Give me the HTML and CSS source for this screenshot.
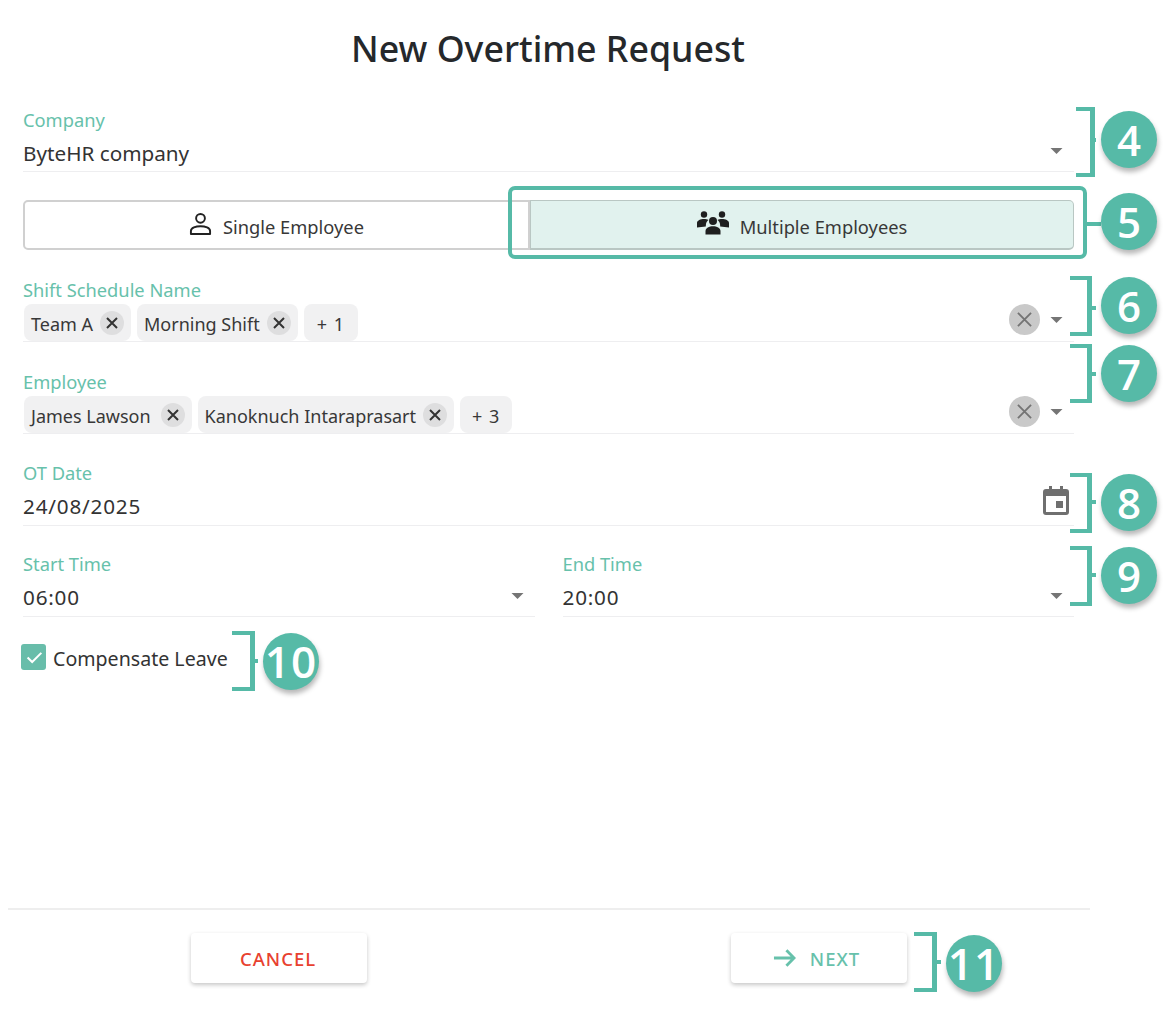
FILE: index.html
```html
<!DOCTYPE html>
<html lang="en">
<head>
<meta charset="utf-8">
<title>New Overtime Request</title>
<link rel="stylesheet" href="styles.css">
</head>
<body>
<main class="page">
  <h1 class="title">New Overtime Request</h1>
  <form class="form">
    <div class="field">
      <span class="label">Company</span>
      <div class="control"><span class="value">ByteHR company</span>
        <span class="adorn"><svg class="caret" viewBox="0 0 14 7"><path d="M0 0h14L7 7z"/></svg></span></div>
    </div>
    <div class="toggle">
      <button type="button" class="seg">
        <svg class="seg-icon" viewBox="0 0 24 24"><circle cx="12" cy="6.600" r="4.600" fill="none" stroke="#222" stroke-width="2"/><path d="M2 23v-3.200c0-3.200 5-4.900 10-4.900s10 1.700 10 4.900V23z" fill="none" stroke="#222" stroke-width="2" stroke-linejoin="round"/></svg>
        Single Employee</button>
      <button type="button" class="seg seg-on">
        <svg class="seg-icon seg-icon-wide" viewBox="0 0 32 24"><g fill="#1f1f1f"><circle cx="7" cy="4" r="3.200"/><circle cx="25" cy="4" r="3.200"/><path d="M0 17v-4.500c0-2.500 3.500-4 7-4 1.700 0 3.300.3 4.500 1-1.300 1-2.200 2.400-2.500 4-.1.800-.2 1.600-.2 2.500z"/><path d="M32 17v-4.500c0-2.500-3.500-4-7-4-1.700 0-3.300.3-4.500 1 1.300 1 2.200 2.400 2.500 4 .1.800.2 1.600.2 2.500z"/><circle cx="16" cy="10.500" r="4"/><path d="M8.500 24v-3.500c0-3 3.700-4.800 7.500-4.800s7.500 1.800 7.500 4.800V24z"/></g></svg>
        Multiple Employees</button>
    </div>
    <div class="field">
      <span class="label">Shift Schedule Name</span>
      <div class="control control-chips">
        <span class="chip">Team A<span class="chip-x"><svg viewBox="0 0 12 12"><path d="M1 1l10 10M11 1L1 11"/></svg></span></span>
        <span class="chip">Morning Shift<span class="chip-x"><svg viewBox="0 0 12 12"><path d="M1 1l10 10M11 1L1 11"/></svg></span></span>
        <span class="chip chip-more">+ 1</span>
        <span class="adorn"><span class="clear"><svg viewBox="0 0 16 16"><path d="M1 1l14 14M15 1L1 15"/></svg></span><svg class="caret" viewBox="0 0 14 7"><path d="M0 0h14L7 7z"/></svg></span>
      </div>
    </div>
    <div class="field">
      <span class="label">Employee</span>
      <div class="control control-chips">
        <span class="chip chip-wide">James Lawson<span class="chip-x"><svg viewBox="0 0 12 12"><path d="M1 1l10 10M11 1L1 11"/></svg></span></span>
        <span class="chip">Kanoknuch Intaraprasart<span class="chip-x"><svg viewBox="0 0 12 12"><path d="M1 1l10 10M11 1L1 11"/></svg></span></span>
        <span class="chip chip-more chip-more-tight">+ 3</span>
        <span class="adorn"><span class="clear"><svg viewBox="0 0 16 16"><path d="M1 1l14 14M15 1L1 15"/></svg></span><svg class="caret" viewBox="0 0 14 7"><path d="M0 0h14L7 7z"/></svg></span>
      </div>
    </div>
    <div class="field">
      <span class="label label-up">OT Date</span>
      <div class="control"><span class="value value-num">24/08/2025</span>
        <span class="adorn"><svg class="calendar" viewBox="0 0 26 29"><path fill="#6f6f6f" fill-rule="evenodd" d="M6 0h3v3h8V0h3v3h3a3 3 0 0 1 3 3v20a3 3 0 0 1-3 3H3a3 3 0 0 1-3-3V6a3 3 0 0 1 3-3h3zM3 10v16h20V10zm10 5h7v7h-7z"/></svg></span></div>
    </div>
    <div class="field-row">
      <div class="field">
        <span class="label label-up">Start Time</span>
        <div class="control"><span class="value value-num">06:00</span>
          <span class="adorn"><svg class="caret" viewBox="0 0 14 7"><path d="M0 0h14L7 7z"/></svg></span></div>
      </div>
      <div class="field">
        <span class="label label-up">End Time</span>
        <div class="control"><span class="value value-num">20:00</span>
          <span class="adorn"><svg class="caret" viewBox="0 0 14 7"><path d="M0 0h14L7 7z"/></svg></span></div>
      </div>
    </div>
    <label class="check"><span class="box"><svg viewBox="0 0 24 24"><path d="M5 12.500l5 5L20 7.500"/></svg></span><span class="check-text">Compensate Leave</span></label>
  </form>
  <footer class="footer">
    <button type="button" class="action action-cancel">CANCEL</button>
    <button type="button" class="action action-next"><svg viewBox="0 0 24 20"><path d="M1 10h21M14 2l8 8-8 8"/></svg>NEXT</button>
  </footer>
</main>

<div class="note note-4"><span class="bracket"></span><span class="badge">4</span></div>
<div class="frame"></div>
<div class="note note-5"><span class="stem"></span><span class="badge">5</span></div>
<div class="note note-6"><span class="bracket"></span><span class="badge">6</span></div>
<div class="note note-7"><span class="bracket"></span><span class="badge">7</span></div>
<div class="note note-8"><span class="bracket"></span><span class="badge">8</span></div>
<div class="note note-9"><span class="bracket"></span><span class="badge">9</span></div>
<div class="note note-10"><span class="bracket"></span><span class="badge badge-two">10</span></div>
<div class="note note-11"><span class="bracket"></span><span class="badge badge-two">11</span></div>
</body>
</html>
```

FILE: styles.css
```css
* { box-sizing: border-box; }
html, body { margin: 0; padding: 0; background: #fff; }
body {
  position: relative;
  width: 1167px;
  height: 1023px;
  overflow: hidden;
  font-family: "Noto Sans", "Open Sans", sans-serif;
  color: #2e2e2e;
}
.page {
  width: 1082px;
  margin-left: 8px;
  display: flex;
  flex-direction: column;
}
.title {
  margin: 0;
  height: 109px;
  padding: 23px 2px 0 0;
  text-align: center;
  font-size: 35.700px;
  line-height: 50px;
  font-weight: 500;
  color: #25282b;
}
.form {
  height: 799px;
  padding: 0 16px 0 15px;
  display: flex;
  flex-direction: column;
  gap: 29px;
}
.form > .toggle { margin-top: -1px; }
.field {
  height: 63px;
  display: flex;
  flex-direction: column;
}
.form > .field { flex: none; }
.field-row { display: flex; gap: 28px; margin-top: -1px; }
.field-row .field { flex: 1 1 0; }
.label {
  font-size: 18.300px;
  line-height: 22px;
  color: #67c1ab;
}
.label-up { margin-top: -1px; }
.control {
  flex: 1;
  display: flex;
  align-items: center;
  gap: 6px;
  border-bottom: 1px solid #eeeef0;
}
.control-chips { align-items: flex-start; padding: 3px 0 0 1px; }
.value { font-size: 20.700px; line-height: 30px; color: #333; padding-top: 4px; }
.value-num { letter-spacing: .8px; padding-top: 3px; }
.adorn {
  margin-left: auto;
  display: flex;
  align-items: center;
  gap: 10px;
}
.caret { width: 13px; height: 6px; fill: #757575; margin-right: 11px; }
.clear {
  width: 31px;
  height: 31px;
  border-radius: 50%;
  background: #c9c9c9;
  display: flex;
  align-items: center;
  justify-content: center;
}
.clear svg { width: 15px; height: 15px; fill: none; stroke: #747474; stroke-width: 2; }
.calendar { width: 26px; height: 29px; margin: 0 5px 9px 0; }
.toggle {
  height: 50px;
  display: flex;
}
.seg {
  flex: 0 0 507px;
  display: flex;
  align-items: center;
  justify-content: center;
  gap: 11px;
  background: #fff;
  border: 2px solid #d0d0d0;
  border-radius: 5px 0 0 5px;
  font-family: inherit;
  font-size: 18.300px;
  color: #383838;
  padding: 3px 0 0;
}
.seg-on {
  flex: 1;
  background: #e1f2ee;
  border: 1px solid #b9c7c3;
  border-bottom-width: 2px;
  border-radius: 0 5px 5px 0;
  gap: 11px;
}
.seg-icon { width: 23px; height: 25px; margin-top: -7px; }
.seg-icon-wide { width: 32px; height: 25px; }
.chip {
  height: 37px;
  padding: 3px 7px 0;
  background: #f1f1f2;
  border-radius: 8px;
  display: flex;
  align-items: center;
  gap: 7px;
  font-size: 18px;
  color: #383838;
}
.chip-wide { gap: 10px; }
.chip-more { padding: 3px 13px 0; letter-spacing: 1px; }
.chip-more-tight { padding: 3px 12px 0; }
.chip-x {
  width: 24px;
  height: 24px;
  margin-top: -3px;
  border-radius: 50%;
  background: #dededf;
  display: flex;
  align-items: center;
  justify-content: center;
}
.chip-x svg { width: 12px; height: 12px; fill: none; stroke: #333; stroke-width: 2; }
.check {
  display: flex;
  align-items: center;
  gap: 7px;
  height: 26px;
  margin: -2px 0 0 -2px;
  font-size: 19.600px;
  color: #333;
}
.check-text { padding-top: 3px; }
.box {
  width: 25px;
  height: 26px;
  border-radius: 3px;
  background: #68bdaa;
  display: flex;
  align-items: center;
  justify-content: center;
}
.box svg { width: 22px; height: 22px; fill: none; stroke: #fff; stroke-width: 2.200; }
.footer {
  height: 115px;
  border-top: 2px solid #eeeeee;
  display: flex;
  gap: 364px;
  padding: 23px 0 0 183px;
}
.action {
  width: 176px;
  height: 50px;
  background: #fff;
  border: 0;
  border-radius: 4px;
  box-shadow: 0 2px 4px rgba(0, 0, 0, .22);
  font-family: inherit;
  font-size: 18.500px;
  font-weight: 500;
  letter-spacing: 1px;
  display: flex;
  align-items: center;
  justify-content: center;
  gap: 14px;
}
.action-cancel { color: #e8412f; padding: 0 2px 0 0; }
.action-next { color: #67c1ab; padding: 0 5px 0 0; }
.action-next svg { width: 23px; height: 20px; fill: none; stroke: #67c1ab; stroke-width: 3; }

.note { position: absolute; display: flex; align-items: center; }
.bracket {
  display: block;
  position: relative;
  flex: none;
  height: 100%;
  margin-right: var(--stem, 9px);
  border: 4px solid #56baa7;
  border-left: 0;
  border-right-width: 5px;
}
.bracket::after {
  content: "";
  position: absolute;
  left: 100%;
  top: calc(50% - 2px + var(--stem-y, 0px));
  width: var(--stem, 9px);
  height: 4px;
  background: #56baa7;
}
.stem { display: block; width: 14px; height: 4px; margin-top: 5px; background: #56baa7; }
.badge {
  width: 56px;
  height: 57px;
  border-radius: 50%;
  background: #56baa7;
  color: #fff;
  font-family: "Open Sans", "Noto Sans", sans-serif;
  font-weight: 600;
  font-size: 42px;
  line-height: 57px;
  text-align: center;
  box-shadow: 1px 4px 5px rgba(0, 0, 0, .28);
  flex: none;
  position: relative;
  top: var(--badge-y, 0px);
}
.badge-two { font-size: 44px; letter-spacing: 1px; }
.frame {
  position: absolute;
  left: 508px;
  top: 186px;
  width: 579px;
  height: 73px;
  border: 4px solid #56baa7;
  border-radius: 7px;
}
.note-4 { left: 1076px; top: 107px; height: 70px; --stem: 6px; --stem-y: -2px; --badge-y: -3px; }
.note-4 .bracket { width: 19px; }
.note-5 { left: 1087px; top: 193px; height: 57px; }
.note-6 { left: 1070px; top: 276px; height: 60px; --stem-y: 2px; --badge-y: -1px; }
.note-6 .bracket { width: 22px; }
.note-7 { left: 1070px; top: 344px; height: 59px; }
.note-7 .bracket { width: 22px; }
.note-8 { left: 1070px; top: 473px; height: 60px; --stem-y: -1px; --badge-y: -1px; }
.note-8 .bracket { width: 22px; }
.note-9 { left: 1070px; top: 546px; height: 60px; --stem-y: -1px; --badge-y: -1px; }
.note-9 .bracket { width: 22px; }
.note-10 { left: 232px; top: 631px; height: 60px; --stem: 8px; }
.note-10 .bracket { width: 23px; }
.note-11 { left: 914px; top: 932px; height: 60px; --stem: 9px; --badge-y: 1px; }
.note-11 .bracket { width: 23px; }
```
